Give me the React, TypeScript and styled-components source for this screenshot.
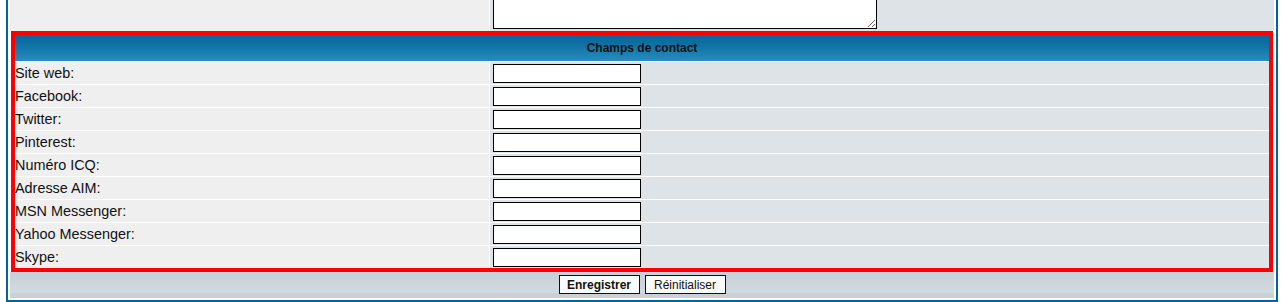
import React from 'react';
import styled, { createGlobalStyle } from 'styled-components';

const GlobalStyle = createGlobalStyle`
  html, body {
    margin: 0;
    padding: 0;
    background: #ffffff;
    overflow: hidden;
  }
  body {
    font-family: "Liberation Sans", Arial, sans-serif;
    color: #000;
  }
`;

const Frame = styled.div`
  width: 1272px;
  box-sizing: border-box;
  margin: -33px 0 0 6px;
  border: 2px solid #006699;
  padding: 2px;
  background: #ffffff;
  display: flex;
  flex-direction: column;
`;

const Row = styled.div<{ $label: number; $height: number }>`
  display: grid;
  grid-template-columns: ${(p) => p.$label}px 1fr;
  column-gap: 1px;
  height: ${(p) => p.$height}px;
`;

const LabelCell = styled.div`
  background: #efefef;
  display: flex;
  align-items: center;
  font-size: 14.4px;
  color: #111;
  white-space: nowrap;
`;

const ValueCell = styled.div<{ $align?: string }>`
  background: #dee3e7;
  display: flex;
  align-items: ${(p) => p.$align || 'center'};
  padding-left: 3px;
`;

const TextArea = styled.textarea`
  width: 384px;
  height: 54px;
  box-sizing: border-box;
  margin-bottom: 2px;
  border: 1px solid #000;
  background: #fff;
  font-family: "Liberation Sans", Arial, sans-serif;
  resize: both;
`;

const Section = styled.div`
  margin: 0 1px;
  border: 4px solid #ff0000;
  background: #ffffff;
  display: flex;
  flex-direction: column;
  gap: 1px;
`;

const Header = styled.div`
  height: 26px;
  display: flex;
  align-items: center;
  justify-content: center;
  background: linear-gradient(to bottom, #05679b 0%, #0d6ea1 30%, #288cbd 100%);
  font-size: 12px;
  font-weight: bold;
  color: #111;
`;

const Field = styled.input`
  width: 148px;
  height: 19px;
  box-sizing: border-box;
  border: 1px solid #000;
  background: #fff;
  padding: 0 2px;
  margin: 0;
`;

const Footer = styled.div`
  height: 26px;
  display: flex;
  align-items: flex-start;
  justify-content: center;
  gap: 5px;
  padding-top: 3px;
  box-sizing: border-box;
  background: linear-gradient(
    to bottom,
    #c8d0d8 0%,
    #d3d9de 80%,
    #c9d0d7 80%,
    #c9d0d7 100%
  );
`;

const Button = styled.button<{ $primary?: boolean }>`
  height: 19px;
  width: 81px;
  box-sizing: border-box;
  padding: 0;
  border: 1px solid #111;
  background: #fafafa;
  font-family: "Liberation Sans", Arial, sans-serif;
  font-size: 12px;
  font-weight: ${(p) => (p.$primary ? 'bold' : 'normal')};
  color: #111;
  cursor: pointer;
`;

const fields = [
  'Site web:',
  'Facebook:',
  'Twitter:',
  'Pinterest:',
  'Numéro ICQ:',
  'Adresse AIM:',
  'MSN Messenger:',
  'Yahoo Messenger:',
  'Skype:',
];

export default function App() {
  return (
    <>
      <GlobalStyle />
      <Frame>
        <Row $label={479} $height={60}>
          <LabelCell />
          <ValueCell $align="flex-end">
            <TextArea />
          </ValueCell>
        </Row>
        <Section>
          <Header>Champs de contact</Header>
          {fields.map((f) => (
            <Row key={f} $label={474} $height={22}>
              <LabelCell>{f}</LabelCell>
              <ValueCell>
                <Field type="text" />
              </ValueCell>
            </Row>
          ))}
        </Section>
        <Footer>
          <Button $primary type="submit">Enregistrer</Button>
          <Button type="reset">Réinitialiser</Button>
        </Footer>
      </Frame>
    </>
  );
}
